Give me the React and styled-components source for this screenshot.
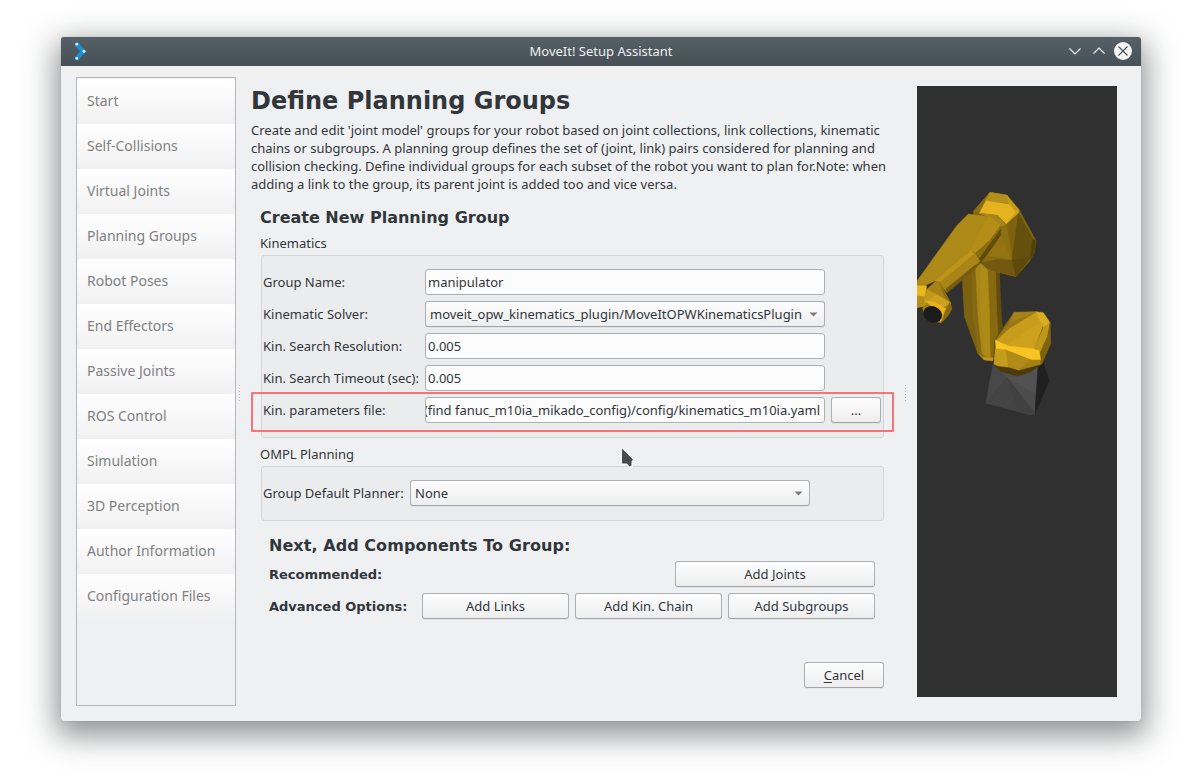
import React from "react";
import styled, { createGlobalStyle, css } from "styled-components";

const GlobalStyle = createGlobalStyle`
  * { box-sizing: border-box; }
  body {
    margin: 0;
    background: #fff;
    font-family: "Noto Sans", sans-serif;
    font-size: 13px;
    color: #31363b;
    overflow: hidden;
  }
`;

const Desktop = styled.div`
  height: 782px;
  padding: 37px 61px 61px;
`;

const Window = styled.div`
  width: 1080px;
  height: 684px;
  display: flex;
  flex-direction: column;
  background: #eff0f1;
  border-radius: 3px;
  box-shadow: 0 0 1px rgba(0, 0, 0, 0.4), 0 10px 30px 5px rgba(32, 40, 42, 0.5);
`;

const TitleBar = styled.header`
  height: 29px;
  flex: none;
  display: grid;
  grid-template-columns: 100px 1fr 100px;
  align-items: center;
  padding: 0 8px 0 10px;
  border-radius: 3px 3px 0 0;
  background: linear-gradient(#566067, #475057);
  color: #eff0f1;
`;

const AppIcon = styled.svg`
  width: 20px;
  height: 22px;
  margin-top: -1px;
`;

const WindowTitle = styled.div`
  text-align: center;
  line-height: 26px;
  height: 28px;
  padding-right: 2px;
`;

const WindowControls = styled.div`
  display: flex;
  justify-content: flex-end;
  gap: 4px;
  margin-top: -1px;

  svg {
    width: 20px;
    height: 20px;
  }
`;

const Body = styled.div`
  flex: 1;
  display: flex;
  align-items: flex-start;
  padding: 11px 24px 0 15px;
`;

const NavList = styled.nav`
  width: 160px;
  height: 629px;
  padding-top: 1px;
  border: 1px solid #b5b7b9;
`;

const NavItem = styled.div`
  height: 45px;
  padding-left: 10px;
  line-height: 44px;
  font-size: 14px;
  color: #808182;
  background: linear-gradient(#ffffff, #f1f1f1);
`;

const Grip = styled.i`
  width: 1px;
  height: 17px;
  flex: none;
  margin: 308px ${(p) => p.$right}px 0 ${(p) => p.$left}px;
  background: repeating-linear-gradient(#b9bbbd 0 1px, transparent 1px 3px);
`;

const Main = styled.main`
  width: 643px;
  display: flex;
  flex-direction: column;
  padding-top: 8px;
`;

const PageTitle = styled.h1`
  margin: 0;
  font: bold 24px/32px "DejaVu Sans", sans-serif;
`;

const Intro = styled.p`
  margin: 4px 0 0;
  font-size: 13px;
  line-height: 18px;
  white-space: nowrap;
`;

const SubTitle = styled.h2`
  margin: 0;
  font: bold 16px/22px "DejaVu Sans", sans-serif;
  letter-spacing: ${(p) => (p.$wide ? 0.06 : 0)}px;
`;

const Editor = styled.section`
  display: flex;
  flex-direction: column;
  padding: 14px 10px 0 9px;
`;

const GroupTitle = styled.div`
  margin-top: ${(p) => p.$top}px;
  height: 20px;
  line-height: 20px;
`;

const GroupBox = styled.div`
  margin: ${(p) => p.$top}px 0 0 1px;
  height: ${(p) => p.$height}px;
  display: flex;
  flex-direction: column;
  gap: 6px;
  padding: 13px 2px 0 1px;
  background: #ebecee;
  border: 1px solid #d3d5d7;
  border-radius: 3px;
`;

const FieldRow = styled.div`
  display: grid;
  grid-template-columns: ${(p) => p.$label}px 400px 50px;
  align-items: center;
  height: 26px;
`;

const ParameterRow = styled(FieldRow)`
  position: relative;
`;

const Label = styled.label`
  line-height: 24px;
  white-space: nowrap;
`;

const frame = css`
  height: 26px;
  border: 1px solid #adafb1;
  border-radius: 3px;
  line-height: 24px;
  white-space: nowrap;
`;

const raised = css`
  ${frame}
  background: linear-gradient(#fdfdfd, #eeeeef);
  border-bottom-color: #a2a4a6;
  box-shadow: 0 1px 0 rgba(0, 0, 0, 0.04);
`;

const TextField = styled.div`
  ${frame}
  display: flex;
  justify-content: ${(p) => (p.$scrolled ? "flex-end" : "flex-start")};
  padding: 0 ${(p) => (p.$scrolled ? 4 : 2)}px 0 ${(p) => (p.$scrolled ? 0 : 2)}px;
  background: #fcfcfc;
`;

const Clip = styled.span`
  display: flex;
  justify-content: flex-end;
  max-width: 100%;
  overflow: hidden;
  letter-spacing: -0.02px;
`;

const ComboBox = styled.div`
  ${raised}
  display: flex;
  justify-content: space-between;
  align-items: center;
  padding: 0 6px 0 4px;

  svg {
    width: 9px;
    height: 5px;
  }
`;

const PushButton = styled.div`
  ${raised}
  width: ${(p) => p.$width}px;
  text-align: center;

  u {
    text-underline-offset: 2px;
    text-decoration-skip-ink: none;
  }
`;

const Browse = styled(PushButton)`
  margin-left: 6px;
`;

const Highlight = styled.div`
  position: absolute;
  left: -12px;
  top: -5px;
  width: 643px;
  height: 40px;
  border: 2px solid rgba(255, 40, 45, 0.62);
  border-radius: 1px;
`;

const Components = styled.section`
  display: flex;
  flex-direction: column;
  padding: 14px 9px 0;
`;

const ActionRow = styled.div`
  display: flex;
  align-items: center;
  gap: 6px;
  margin-top: ${(p) => p.$top}px;
`;

const ActionLabel = styled.strong`
  flex: 1;
  height: 24px;
  font: bold 13px/26px "DejaVu Sans", sans-serif;
`;

const Footer = styled.footer`
  display: flex;
  justify-content: flex-end;
  margin-top: 43px;
`;

const Viewport = styled.div`
  width: 200px;
  height: 611px;
  margin-top: 9px;
  background: #303030;

  svg {
    display: block;
    width: 100%;
    height: 100%;
  }
`;

const Cursor = styled.svg`
  position: absolute;
  left: 619px;
  top: 445px;
  width: 18px;
  height: 26px;
`;

const sections = [
  "Start", "Self-Collisions", "Virtual Joints", "Planning Groups", "Robot Poses", "End Effectors",
  "Passive Joints", "ROS Control", "Simulation", "3D Perception", "Author Information", "Configuration Files",
];

/* Robot mesh, back to front: [fill, points] */
const faces = [
  // upper arm
  ["#7b6110", "157,300 198,248 206,400 212,450 232,540 215,534 203,520 163,410"],
  ["#846812", "184,262 198,248 208,420 222,530 203,520 188,400"],
  ["#a98617", "196,252 212,248 236,270 242,395 248,520 240,538 216,522 204,410"],
  ["#ae8a17", "212,258 232,272 236,420 240,524 226,522 210,400"],
  ["#866911", "234,262 268,272 270,400 277,442 254,480 250,540 242,535 240,400"],
  ["#634d0d", "258,270 268,275 274,400 277,442 266,460 262,400"],
  ["#bd951a", "208,522 216,530 250,534 248,543 222,540"],
  // base
  ["#3b3b3b", "250,550 400,546 418,602 375,704 360,705 228,670"],
  ["#484848", "250,552 290,592 228,670 238,610"],
  ["#444444", "290,592 228,670 360,704"],
  ["#4d4d4d", "258,562 325,588 290,594"],
  ["#4c4c4c", "290,592 360,575 378,562 375,700"],
  ["#525252", "290,592 325,588 384,562 376,640"],
  ["#414141", "290,592 375,700 360,705 326,690"],
  ["#202020", "384,562 400,546 418,602 375,702"],
  // turret
  ["#7a5f10", "256,480 313,397 378,395 400,398 420,428 422,490 396,552 325,588 266,570 252,552"],
  ["#866910", "256,480 312,397 340,397 300,440 258,482"],
  ["#a58217", "312,397 378,395 350,410 296,432"],
  ["#997713", "257,480 296,430 375,400 300,450 262,484"],
  ["#c79d1b", "257,484 300,445 378,397 400,428 372,507 296,500"],
  ["#cda11c", "290,494 386,428 400,432 372,508"],
  ["#dbae20", "378,395 400,398 420,428 402,444 386,414"],
  ["#bf971b", "372,505 402,440 420,428 412,470 392,515"],
  ["#7d6210", "420,428 422,490 398,545 392,515 412,470"],
  ["#f8c421", "256,481 296,498 370,506 388,512 392,540 364,540 290,512 258,507"],
  ["#c69c1b", "256,507 290,510 296,562 266,558 252,552"],
  ["#b08b17", "288,510 364,540 326,572 296,562"],
  ["#a58216", "364,540 392,540 390,554 326,572"],
  ["#4b3a0b", "252,556 266,560 296,563 326,572 390,555 360,577 325,588 270,574"],
  // elbow casing
  ["#806510", "190,94 240,37 290,45 327,88 378,182 374,215 360,242 318,290 240,270 215,248 190,103"],
  ["#8b6e12", "190,94 240,37 226,66 208,98"],
  ["#b38e18", "240,37 290,45 307,72 226,62"],
  ["#c39a1b", "290,45 326,88 318,96 296,74"],
  ["#e6b320", "228,62 296,73 318,95 290,133 262,105 208,100"],
  ["#d1a51e", "318,95 327,88 325,102 290,134"],
  ["#a78417", "208,99 262,106 288,134 275,142 240,114"],
  ["#7d6210", "288,134 325,100 368,182 305,240"],
  ["#8d7012", "276,140 290,134 308,240 270,165"],
  ["#65500d", "325,100 370,178 363,232 306,240"],
  ["#524008", "368,178 378,182 374,215 360,240"],
  ["#947312", "272,164 306,240 230,230"],
  ["#735910", "230,230 306,240 318,290 240,270 215,248"],
  ["#8a6c10", "216,246 230,230 306,240 262,237"],
  ["#5e480c", "306,240 364,232 318,290"],
  // forearm
  ["#ad8917", "175,102 238,110 252,116 190,214 75,303 30,323 21,318 21,303 140,137"],
  ["#b48e19", "238,108 272,136 240,180 196,220 182,210 216,142"],
  ["#8a6c11", "272,138 272,166 212,250 196,220 236,186"],
  ["#604b0c", "272,148 272,166 212,250 206,238"],
  ["#bd951a", "75,302 182,212 196,221 94,309"],
  ["#a98517", "88,309 196,221 210,244 110,337"],
  ["#765b10", "196,255 212,248 192,270 112,338 108,326"],
  // wrist
  ["#eab71f", "21,317 50,317 42,378 21,382"],
  ["#b28d17", "21,348 44,350 42,378 21,384"],
  ["#a78316", "78,303 90,307 122,370 124,386 114,404 94,428 68,424 44,410 38,386 52,326"],
  ["#c2981b", "50,328 80,344 54,364 40,378"],
  ["#8d6f12", "88,306 122,370 104,352"],
  ["#cda01d", "80,343 118,366 122,372 96,382 52,364"],
  ["#e6b31f", "44,362 78,368 108,386 100,420 90,424 84,390 62,376"],
  ["#8a6b11", "118,368 126,386 114,408 94,428 104,396"],
];

function Robot() {
  return (
    <svg viewBox="21 -282 600 1833">
      {faces.map(([fill, points]) => (
        <polygon key={points} points={points} fill={fill} stroke={fill} strokeWidth="1.2" strokeLinejoin="round" />
      ))}
      <ellipse cx="68" cy="403" rx="29" ry="24" transform="rotate(22 68 403)" fill="#1b1b1c" />
    </svg>
  );
}

function Combo({ children }) {
  return (
    <ComboBox>
      {children}
      <svg viewBox="0 0 9 5"><path d="M0.5 0.5h8L4.5 4.5z" fill="#7b7d80" /></svg>
    </ComboBox>
  );
}

export default function App() {
  return (
    <Desktop>
      <GlobalStyle />
      <Window>
        <TitleBar>
          <AppIcon viewBox="0 0 20 22">
            <path d="M6 4.5 12 11.3 6 18.2" fill="none" stroke="#1b8fd0" strokeWidth="4.4" strokeLinejoin="round" strokeLinecap="round" />
            <circle cx="5.8" cy="4.2" r="1.4" fill="#d9f1fb" />
            <circle cx="13" cy="11.3" r="1.5" fill="#d9f1fb" />
            <circle cx="5.8" cy="18.4" r="1.4" fill="#d9f1fb" />
          </AppIcon>
          <WindowTitle>MoveIt! Setup Assistant</WindowTitle>
          <WindowControls>
            <svg viewBox="0 0 20 20"><path d="M4.5 7.5 10 13l5.5-5.5" fill="none" stroke="#fcfcfc" strokeWidth="1.1" /></svg>
            <svg viewBox="0 0 20 20"><path d="M4.5 12.5 10 7l5.5 5.5" fill="none" stroke="#fcfcfc" strokeWidth="1.1" /></svg>
            <svg viewBox="0 0 20 20">
              <circle cx="10" cy="10" r="9" fill="#f4f5f5" />
              <path d="m5.5 5.5 9 9m0-9-9 9" stroke="#475057" strokeWidth="1.1" />
            </svg>
          </WindowControls>
        </TitleBar>
        <Body>
          <NavList>
            {sections.map((name) => <NavItem key={name}>{name}</NavItem>)}
          </NavList>
          <Grip $left={3} $right={11} />
          <Main>
            <PageTitle>Define Planning Groups</PageTitle>
            <Intro>
              Create and edit 'joint model' groups for your robot based on joint collections, link collections, kinematic<br />
              chains or subgroups. A planning group defines the set of (joint, link) pairs considered for planning and<br />
              collision checking. Define individual groups for each subset of the robot you want to plan for.Note: when<br />
              adding a link to the group, its parent joint is added too and vice versa.
            </Intro>
            <Editor>
              <SubTitle>Create New Planning Group</SubTitle>
              <GroupTitle $top={4}>Kinematics</GroupTitle>
              <GroupBox $top={2} $height={183}>
                <FieldRow $label={162}>
                  <Label>Group Name:</Label>
                  <TextField>manipulator</TextField>
                </FieldRow>
                <FieldRow $label={162}>
                  <Label>Kinematic Solver:</Label>
                  <Combo>moveit_opw_kinematics_plugin/MoveItOPWKinematicsPlugin</Combo>
                </FieldRow>
                <FieldRow $label={162}>
                  <Label>Kin. Search Resolution:</Label>
                  <TextField>0.005</TextField>
                </FieldRow>
                <FieldRow $label={162}>
                  <Label>Kin. Search Timeout (sec):</Label>
                  <TextField>0.005</TextField>
                </FieldRow>
                <ParameterRow $label={162}>
                  <Label>Kin. parameters file:</Label>
                  <TextField $scrolled>
                    <Clip>(find fanuc_m10ia_mikado_config)/config/kinematics_m10ia.yaml</Clip>
                  </TextField>
                  <Browse $width={50}>...</Browse>
                  <Highlight />
                </ParameterRow>
              </GroupBox>
              <GroupTitle $top={6}>OMPL Planning</GroupTitle>
              <GroupBox $top={2} $height={55}>
                <FieldRow $label={147}>
                  <Label>Group Default Planner:</Label>
                  <Combo>None</Combo>
                </FieldRow>
              </GroupBox>
              <Components>
                <SubTitle $wide>Next, Add Components To Group:</SubTitle>
                <ActionRow $top={4}>
                  <ActionLabel>Recommended:</ActionLabel>
                  <PushButton $width={200}>Add Joints</PushButton>
                </ActionRow>
                <ActionRow $top={6}>
                  <ActionLabel>Advanced Options:</ActionLabel>
                  <PushButton $width={147}>Add Links</PushButton>
                  <PushButton $width={147}>Add Kin. Chain</PushButton>
                  <PushButton $width={147}>Add Subgroups</PushButton>
                </ActionRow>
              </Components>
              <Footer>
                <PushButton $width={80}><u>C</u>ancel</PushButton>
              </Footer>
            </Editor>
          </Main>
          <Grip $left={11} $right={11} />
          <Viewport><Robot /></Viewport>
        </Body>
      </Window>
      <Cursor viewBox="0 0 18 26">
        <path d="M3 3.5v15.500h4.500l3 3 2.500-1v-4l1-2.500z" fill="#fff" stroke="#fff" strokeWidth="2" strokeLinejoin="round" />
        <path d="M3 3.500v15h5l2.500 3 2-1v-4l1.500-2z" fill="#4a4a4a" />
      </Cursor>
    </Desktop>
  );
}
